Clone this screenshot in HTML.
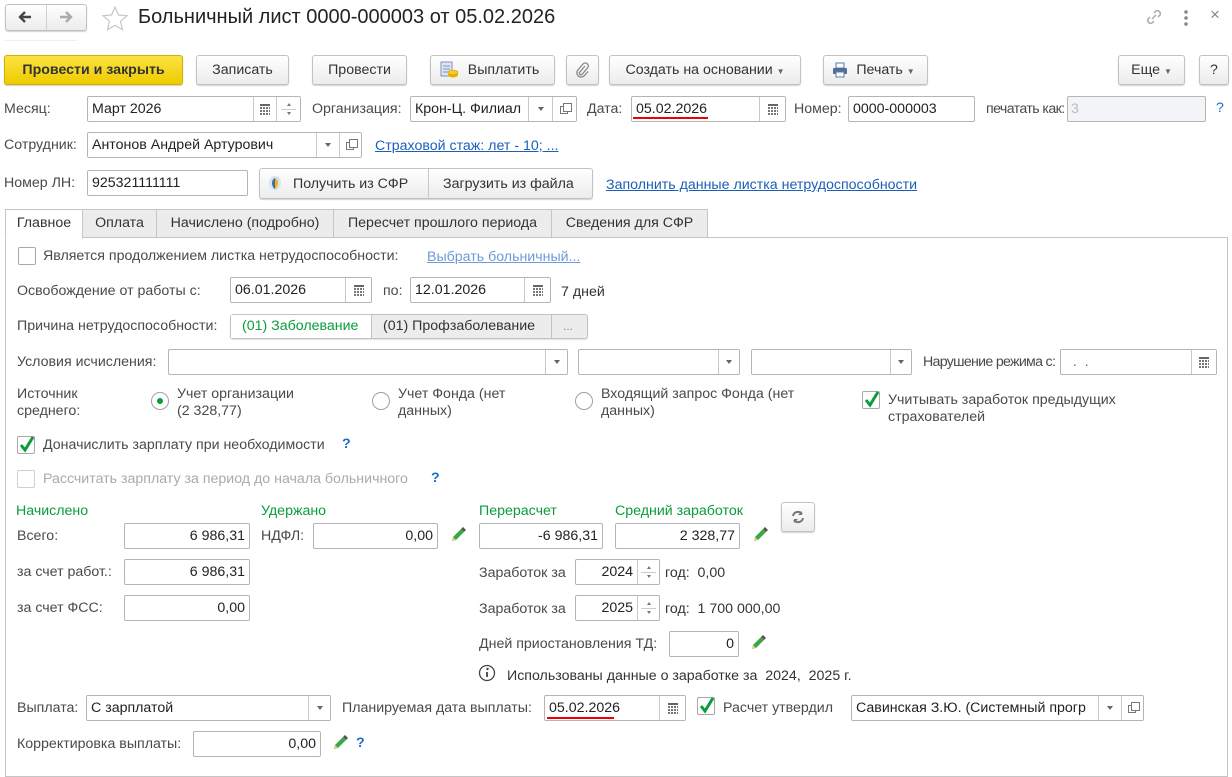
<!DOCTYPE html>
<html><head><meta charset="utf-8"><style>
*{box-sizing:border-box}
body{margin:0;width:1232px;height:763px;overflow:hidden;background:#fff;font-family:"Liberation Sans",Arial,sans-serif;font-size:14.2px;color:#4a4a4a;position:relative}
.a{position:absolute;white-space:nowrap}
.l{position:absolute;white-space:nowrap;line-height:18px;color:#4a4a4a}
.i{position:absolute;height:26px;border:1px solid #b5b5b5;border-radius:2px;background:#fff;line-height:24px;padding:0 4px;color:#222;white-space:nowrap;overflow:hidden}
.r{text-align:right}
.s{position:absolute;top:0;bottom:0;border-left:1px solid #c8c8c8;background:#fff}
.btn{position:absolute;height:30px;border:1px solid #c2c2c2;border-radius:3px;background:linear-gradient(#fff,#ececec);box-shadow:0 1px 1px rgba(0,0,0,.18);color:#333;line-height:28px;text-align:center;white-space:nowrap}
.cal{position:absolute;left:50%;top:50%;width:10px;height:11px;margin:-5px 0 0 -5px;background:repeating-linear-gradient(90deg,transparent 0 2px,#fff 2px 3px),repeating-linear-gradient(0deg,transparent 0 2px,#fff 2px 3px),#777;border-top:2px solid #666}
.dd{position:absolute;left:50%;top:50%;margin:-2px 0 0 -3px;border-left:3px solid transparent;border-right:3px solid transparent;border-top:4px solid #666}
.op{position:absolute;left:50%;top:50%;width:8px;height:8px;margin:-3px 0 0 -5px;border:1px solid #777;background:#fff}
.op:after{content:"";position:absolute;left:2px;top:-4px;width:7px;height:7px;border:1px solid #777;background:#fff}
.cb{position:absolute;width:18px;height:18px;border:1px solid #a8a8a8;border-radius:2px;background:#fff}
.rad{position:absolute;width:18px;height:18px;border:1px solid #a0a0a0;border-radius:50%;background:#fff}
.g{color:#0a9d3c}
.lk{color:#1c5fb8;text-decoration:underline}
.q{color:#1c6fc0;font-weight:bold}
.tab{position:absolute;top:209px;height:29px;border:1px solid #c5c5c5;background:#ececec;line-height:27px;text-align:center;color:#333;white-space:nowrap}
.red{position:absolute;height:2px;background:#e00}
.sp{position:absolute;top:0;bottom:0;border-left:1px solid #c8c8c8;background:#fff}
.sp i{position:absolute;left:50%;margin-left:-2px;border-left:2px solid transparent;border-right:2px solid transparent}
</style></head><body>

<!-- header -->
<div class="btn" style="left:5px;top:4px;width:82px;height:27px;"></div>
<div class="a" style="left:46px;top:5px;width:1px;height:25px;background:#d0d0d0"></div>
<svg class="a" style="left:17px;top:10px" width="16" height="14"><path d="M14 7H3M8 2L3 7l5 5" stroke="#444" stroke-width="2.4" fill="none"/></svg>
<svg class="a" style="left:58px;top:10px" width="16" height="14"><path d="M2 7h11M8 2l5 5-5 5" stroke="#aaa" stroke-width="2.4" fill="none"/></svg>
<svg class="a" style="left:101px;top:5px" width="28" height="27"><path d="M14 2l3.5 8 8.5.7-6.5 5.6 2 8.4L14 20.2 6.5 24.7l2-8.4L2 10.7l8.5-.7z" stroke="#c8c8c8" stroke-width="1.2" fill="none"/></svg>
<div class="a" style="left:138px;top:6px;font-size:20px;color:#222">Больничный лист 0000-000003 от 05.02.2026</div>
<div class="a" style="left:5px;top:40px;width:72px;height:1px;background:#eee"></div>
<svg class="a" style="left:1144px;top:7px" width="20" height="20"><path d="M8 12l4-4M6 10l-2 2a3 3 0 004 4l2-2M14 10l2-2a3 3 0 00-4-4l-2 2" stroke="#aaa" stroke-width="1.5" fill="none"/></svg>
<div class="a" style="left:1184px;top:9px;width:4px;height:18px;background:radial-gradient(circle,#888 1.6px,transparent 2px) 0 0/4px 6px"></div>
<div class="a" style="left:1210px;top:5px;font-size:17px;color:#888">×</div>

<!-- toolbar -->
<div class="btn" style="left:4px;top:55px;width:179px;background:linear-gradient(#fbe341,#efcb00);border-color:#d1b000;font-weight:bold;color:#333">Провести и закрыть</div>
<div class="btn" style="left:196px;top:55px;width:93px">Записать</div>
<div class="btn" style="left:312px;top:55px;width:95px">Провести</div>
<div class="btn" style="left:430px;top:55px;width:125px;padding-left:22px">Выплатить</div>
<svg class="a" style="left:440px;top:61px" width="20" height="18"><rect x="1" y="1" width="11" height="14" fill="#dfe6f2" stroke="#7d93b8"/><path d="M3 5h7M3 8h7M3 11h5" stroke="#7d93b8"/><ellipse cx="13" cy="14" rx="5" ry="2.5" fill="#e8b400"/><ellipse cx="13" cy="11.5" rx="5" ry="2.5" fill="#f7cc2a" stroke="#c99600" stroke-width=".6"/></svg>
<div class="btn" style="left:566px;top:55px;width:33px"></div>
<svg class="a" style="left:574px;top:61px" width="16" height="18"><path d="M11 5l-5.5 6.5a1.6 1.6 0 002.4 2L13.5 7a3 3 0 00-4.5-4L3.5 9.5a4.3 4.3 0 006.5 5.5l4-4.5" stroke="#888" stroke-width="1.3" fill="none"/></svg>
<div class="btn" style="left:609px;top:55px;width:192px">Создать на основании <span style="font-size:8px;color:#666">▼</span></div>
<div class="btn" style="left:823px;top:55px;width:105px;padding-left:20px">Печать <span style="font-size:8px;color:#666">▼</span></div>
<svg class="a" style="left:832px;top:62px" width="16" height="16"><rect x="4" y="1" width="8" height="5" fill="#fff" stroke="#5a7aa8"/><rect x="1" y="6" width="14" height="6" rx="1" fill="#4f6f9e"/><rect x="4" y="10" width="8" height="5" fill="#fff" stroke="#5a7aa8"/></svg>
<div class="btn" style="left:1118px;top:55px;width:67px">Еще <span style="font-size:8px;color:#666">▼</span></div>
<div class="btn" style="left:1199px;top:55px;width:30px">?</div>

<!-- row1 -->
<div class="l" style="left:4px;top:100px">Месяц:</div>
<div class="i" style="left:87px;top:96px;width:214px">Март 2026<div class="s" style="left:165px;width:23px"><div class="cal"></div></div><div class="sp" style="left:188px;width:24px"><i style="top:6px;border-bottom:3px solid #777"></i><i style="top:15px;border-top:3px solid #777"></i><div class="a" style="left:4px;top:12px;width:15px;height:1px;background:#ccc"></div></div></div>
<div class="l" style="left:312px;top:100px">Организация:</div>
<div class="i" style="left:410px;top:96px;width:167px">Крон-Ц. Филиал<div class="s" style="left:117px;width:24px"><div class="dd"></div></div><div class="s" style="left:141px;width:24px"><div class="op"></div></div></div>
<div class="l" style="left:587px;top:100px">Дата:</div>
<div class="i" style="left:631px;top:96px;width:155px">05.02.2026<div class="s" style="left:127px;width:26px"><div class="cal"></div></div></div>
<div class="red" style="left:633px;top:117px;width:75px"></div>
<div class="l" style="left:794px;top:100px">Номер:</div>
<div class="i" style="left:848px;top:96px;width:127px">0000-000003</div>
<div class="l" style="left:986px;top:100px;letter-spacing:-0.6px">печатать как:</div>
<div class="i" style="left:1067px;top:96px;width:139px;background:#f2f4f8;color:#bbb;padding-left:3px">3</div>
<div class="l q" style="left:1216px;top:99px;font-weight:normal">?</div>

<!-- row2 -->
<div class="l" style="left:4px;top:136px">Сотрудник:</div>
<div class="i" style="left:87px;top:132px;width:275px">Антонов Андрей Артурович<div class="s" style="left:228px;width:23px"><div class="dd"></div></div><div class="s" style="left:251px;width:22px"><div class="op"></div></div></div>
<div class="l lk" style="left:375px;top:137px">Страховой стаж: лет - 10; ...</div>

<!-- row3 -->
<div class="l" style="left:4px;top:174px">Номер ЛН:</div>
<div class="i" style="left:87px;top:170px;width:161px">925321111111</div>
<div class="btn" style="left:259px;top:168px;width:334px;height:31px"></div>
<div class="a" style="left:428px;top:169px;width:1px;height:29px;background:#c8c8c8"></div>
<svg class="a" style="left:267px;top:175px" width="16" height="17"><path d="M8 1C4 1 2 4 2 8c0 4 3 7 6 8 3-1 6-4 6-8 0-4-2-7-6-7z" fill="#d8e4f2"/><path d="M8 3c-2 1-3 3-3 5s1 5 3 6z" fill="#3b6db1"/><path d="M8 3c2 1 3 3 3 5s-1 5-3 6z" fill="#f0b400"/></svg>
<div class="l" style="left:293px;top:175px;color:#333">Получить из СФР</div>
<div class="l" style="left:443px;top:175px;color:#333">Загрузить из файла</div>
<div class="l lk" style="left:606px;top:176px">Заполнить данные листка нетрудоспособности</div>

<!-- tabs -->
<div class="a" style="left:5px;top:237px;width:1223px;height:540px;border:1px solid #c5c5c5;background:#fff"></div>
<div class="tab" style="left:82px;width:75px">Оплата</div>
<div class="tab" style="left:156px;width:178px">Начислено (подробно)</div>
<div class="tab" style="left:333px;width:219px">Пересчет прошлого периода</div>
<div class="tab" style="left:551px;width:157px">Сведения для СФР</div>
<div class="tab" style="left:5px;width:78px;background:#fff;border-bottom-color:#fff;height:30px">Главное</div>

<!-- panel -->
<div class="cb" style="left:18px;top:247px"></div>
<div class="l" style="left:43px;top:247px">Является продолжением листка нетрудоспособности:</div>
<div class="l" style="left:427px;top:248px;color:#6d9bd6;text-decoration:underline">Выбрать больничный...</div>

<div class="l" style="left:17px;top:282px">Освобождение от работы с:</div>
<div class="i" style="left:230px;top:277px;width:142px">06.01.2026<div class="s" style="left:114px;width:26px"><div class="cal"></div></div></div>
<div class="l" style="left:383px;top:282px">по:</div>
<div class="i" style="left:410px;top:277px;width:141px">12.01.2026<div class="s" style="left:113px;width:26px"><div class="cal"></div></div></div>
<div class="l" style="left:561px;top:283px;color:#333">7 дней</div>

<div class="l" style="left:17px;top:317px">Причина нетрудоспособности:</div>
<div class="a" style="left:230px;top:314px;width:358px;height:25px;border:1px solid #c2c2c2;border-radius:3px;background:#ececec;box-shadow:0 1px 1px rgba(0,0,0,.12)"></div>
<div class="a" style="left:231px;top:315px;width:141px;height:23px;background:#fff;border-right:1px solid #c2c2c2"></div>
<div class="l g" style="left:242px;top:317px">(01) Заболевание</div>
<div class="l" style="left:383px;top:317px;color:#333">(01) Профзаболевание</div>
<div class="a" style="left:551px;top:315px;width:1px;height:23px;background:#c2c2c2"></div>
<div class="l" style="left:563px;top:317px;color:#888;font-size:12px">...</div>

<div class="l" style="left:17px;top:353px">Условия исчисления:</div>
<div class="i" style="left:168px;top:349px;width:400px"><div class="s" style="left:376px;width:22px"><div class="dd"></div></div></div>
<div class="i" style="left:578px;top:349px;width:162px"><div class="s" style="left:139px;width:21px"><div class="dd"></div></div></div>
<div class="i" style="left:751px;top:349px;width:161px"><div class="s" style="left:138px;width:21px"><div class="dd"></div></div></div>
<div class="l" style="left:923px;top:353px;letter-spacing:-0.7px">Нарушение режима с:</div>
<div class="i" style="left:1060px;top:349px;width:157px;color:#666">&nbsp;&nbsp;.&nbsp;&nbsp;.<div class="s" style="left:130px;width:25px"><div class="cal"></div></div></div>

<div class="l" style="left:17px;top:385px">Источник</div>
<div class="l" style="left:17px;top:402px">среднего:</div>
<div class="rad" style="left:151px;top:392px"><div class="a" style="left:5px;top:5px;width:6px;height:6px;border-radius:50%;background:#0a9d3c"></div></div>
<div class="l" style="left:177px;top:385px">Учет организации</div>
<div class="l" style="left:177px;top:402px">(2 328,77)</div>
<div class="rad" style="left:372px;top:392px"></div>
<div class="l" style="left:398px;top:385px">Учет Фонда (нет</div>
<div class="l" style="left:398px;top:402px">данных)</div>
<div class="rad" style="left:575px;top:392px"></div>
<div class="l" style="left:601px;top:385px">Входящий запрос Фонда (нет</div>
<div class="l" style="left:601px;top:402px">данных)</div>
<div class="cb" style="left:862px;top:391px"><svg class="a" style="left:1px;top:-2px" width="16" height="18"><path d="M2 10l4 5 8-13" stroke="#0a9d3c" stroke-width="3" fill="none"/></svg></div>
<div class="l" style="left:888px;top:391px">Учитывать заработок предыдущих</div>
<div class="l" style="left:888px;top:408px">страхователей</div>

<div class="cb" style="left:17px;top:436px"><svg class="a" style="left:1px;top:-2px" width="16" height="18"><path d="M2 10l4 5 8-13" stroke="#0a9d3c" stroke-width="3" fill="none"/></svg></div>
<div class="l" style="left:43px;top:436px">Доначислить зарплату при необходимости</div>
<div class="l q" style="left:342px;top:435px">?</div>

<div class="cb" style="left:17px;top:470px;border-color:#d0d0d0"></div>
<div class="l" style="left:43px;top:470px;color:#aaa">Рассчитать зарплату за период до начала больничного</div>
<div class="l q" style="left:431px;top:469px">?</div>

<div class="l g" style="left:16px;top:502px">Начислено</div>
<div class="l g" style="left:261px;top:502px">Удержано</div>
<div class="l g" style="left:479px;top:502px">Перерасчет</div>
<div class="l g" style="left:615px;top:502px">Средний заработок</div>
<div class="btn" style="left:781px;top:502px;width:34px;height:30px"></div>
<svg class="a" style="left:790px;top:510px" width="16" height="14"><path d="M3 6a5 5 0 019-2M13 8a5 5 0 01-9 2" stroke="#777" stroke-width="2" fill="none"/><path d="M12 1v4H8zM4 13V9h4z" fill="#777"/></svg>

<div class="l" style="left:17px;top:527px">Всего:</div>
<div class="i r" style="left:124px;top:523px;width:126px">6 986,31</div>
<div class="l" style="left:261px;top:527px">НДФЛ:</div>
<div class="i r" style="left:313px;top:523px;width:125px">0,00</div>
<div class="i r" style="left:479px;top:523px;width:124px">-6 986,31</div>
<div class="i r" style="left:615px;top:523px;width:125px">2 328,77</div>

<div class="l" style="left:17px;top:563px">за счет работ.:</div>
<div class="i r" style="left:124px;top:559px;width:126px">6 986,31</div>
<div class="l" style="left:479px;top:564px">Заработок за</div>
<div class="i r" style="left:575px;top:559px;width:85px;padding-right:26px">2024<div class="sp" style="left:61px;width:22px"><i style="top:6px;border-bottom:3px solid #777"></i><i style="top:15px;border-top:3px solid #777"></i><div class="a" style="left:3px;top:12px;width:15px;height:1px;background:#ccc"></div></div></div>
<div class="l" style="left:665px;top:564px;color:#333">год:&nbsp; 0,00</div>

<div class="l" style="left:17px;top:599px">за счет ФСС:</div>
<div class="i r" style="left:124px;top:595px;width:126px">0,00</div>
<div class="l" style="left:479px;top:600px">Заработок за</div>
<div class="i r" style="left:575px;top:595px;width:85px;padding-right:26px">2025<div class="sp" style="left:61px;width:22px"><i style="top:6px;border-bottom:3px solid #777"></i><i style="top:15px;border-top:3px solid #777"></i><div class="a" style="left:3px;top:12px;width:15px;height:1px;background:#ccc"></div></div></div>
<div class="l" style="left:665px;top:600px;color:#333">год:&nbsp; 1 700 000,00</div>

<div class="l" style="left:479px;top:635px">Дней приостановления ТД:</div>
<div class="i r" style="left:669px;top:631px;width:70px">0</div>

<svg class="a" style="left:478px;top:664px" width="18" height="18"><circle cx="9" cy="9" r="7.5" stroke="#444" stroke-width="1.3" fill="none"/><circle cx="9.5" cy="5" r="1.2" fill="#444"/><path d="M9 8v5" stroke="#444" stroke-width="1.8"/></svg>
<div class="l" style="left:507px;top:667px;color:#333">Использованы данные о заработке за&nbsp; 2024,&nbsp; 2025 г.</div>

<div class="l" style="left:17px;top:699px">Выплата:</div>
<div class="i" style="left:86px;top:695px;width:245px">С зарплатой<div class="s" style="left:221px;width:22px"><div class="dd"></div></div></div>
<div class="l" style="left:342px;top:699px">Планируемая дата выплаты:</div>
<div class="i" style="left:544px;top:695px;width:142px">05.02.2026<div class="s" style="left:114px;width:26px"><div class="cal"></div></div></div>
<div class="red" style="left:547px;top:717px;width:67px"></div>
<div class="cb" style="left:697px;top:697px"><svg class="a" style="left:1px;top:-2px" width="16" height="18"><path d="M2 10l4 5 8-13" stroke="#0a9d3c" stroke-width="3" fill="none"/></svg></div>
<div class="l" style="left:723px;top:699px">Расчет утвердил</div>
<div class="i" style="left:851px;top:695px;width:293px">Савинская З.Ю. (Системный прогр<div class="s" style="left:246px;width:23px"><div class="dd"></div></div><div class="s" style="left:269px;width:22px"><div class="op"></div></div></div>

<div class="l" style="left:17px;top:735px">Корректировка выплаты:</div>
<div class="i r" style="left:193px;top:731px;width:128px">0,00</div>
<div class="l q" style="left:356px;top:734px">?</div>

<!-- pencils -->
<svg class="a" style="left:449px;top:526px" width="18" height="18"><path d="M3 15l1-4 8-8 3 3-8 8z" fill="#3aa845"/><path d="M3 15l1-4 3 3z" fill="#e9c98c"/><path d="M12 3l2-2 3 3-2 2z" fill="#555"/></svg>
<svg class="a" style="left:751px;top:526px" width="18" height="18"><path d="M3 15l1-4 8-8 3 3-8 8z" fill="#3aa845"/><path d="M3 15l1-4 3 3z" fill="#e9c98c"/><path d="M12 3l2-2 3 3-2 2z" fill="#555"/></svg>
<svg class="a" style="left:749px;top:634px" width="18" height="18"><path d="M3 15l1-4 8-8 3 3-8 8z" fill="#3aa845"/><path d="M3 15l1-4 3 3z" fill="#e9c98c"/><path d="M12 3l2-2 3 3-2 2z" fill="#555"/></svg>
<svg class="a" style="left:331px;top:734px" width="18" height="18"><path d="M3 15l1-4 8-8 3 3-8 8z" fill="#3aa845"/><path d="M3 15l1-4 3 3z" fill="#e9c98c"/><path d="M12 3l2-2 3 3-2 2z" fill="#555"/></svg>

</body></html>
